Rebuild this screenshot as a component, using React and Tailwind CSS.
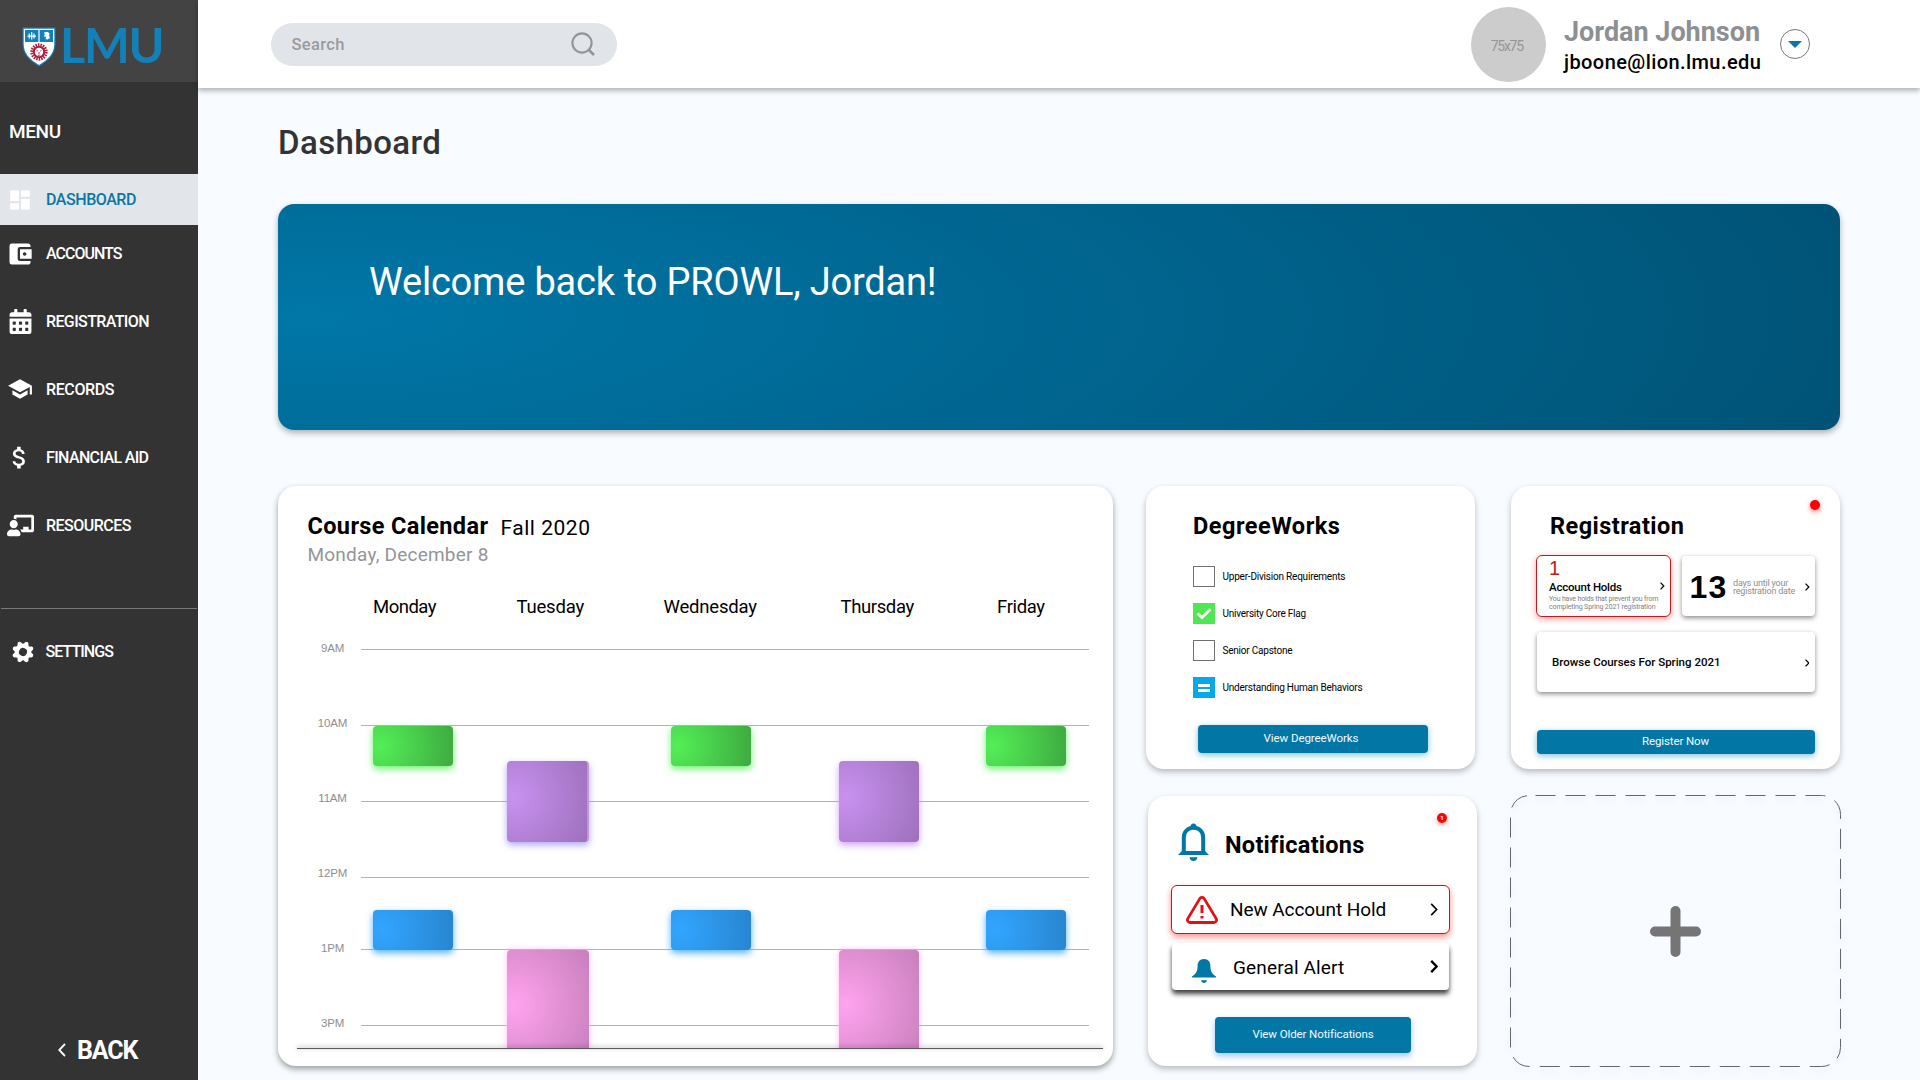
import React from "react";
import { MdDashboard, MdAccountBalanceWallet, MdSchool, MdAttachMoney } from "react-icons/md";
import { FaCalendarAlt, FaChalkboardTeacher } from "react-icons/fa";
import { BsGearFill } from "react-icons/bs";

function Chevron({ className, left = false, stroke = 2 }) {
  return (
    <svg viewBox="0 0 8 14" className={className} fill="none" stroke="currentColor" strokeWidth={stroke}>
      <path d={left ? "M7 1 L1.2 7 L7 13" : "M1 1 L6.8 7 L1 13"} />
    </svg>
  );
}

function Shield() {
  return (
    <svg viewBox="0 0 34 40" className="h-10 w-[34px]">
      <path d="M0.5 0.5H33.5V17C33.5 27 27 33.5 17 39.5C7 33.5 0.5 27 0.5 17Z" fill="#1380b8" />
      <path d="M1.7 1.7H32.3V17C32.3 26.3 26.4 32.4 17 38C7.6 32.4 1.7 26.3 1.7 17Z" fill="#fff" />
      <path d="M3 3H16.4V15H3Z M17.6 3H31V15H17.6Z" fill="#1380b8" />
      <path d="M5.5 9.2H14 M7.3 6.6V11.5 M9.7 5V12.6 M12 6.6V11.5" stroke="#fff" strokeWidth="1.2" fill="none" />
      <path d="M22 5.6L25 4.8L27.6 6.2L27 8.5L28 11L25.5 12.6L23.4 12L24.4 10L21.6 9.2L22.8 7.8Z" fill="#fff" />
      <circle cx="17" cy="25" r="7.2" fill="none" stroke="#b01c3c" strokeWidth="3" strokeDasharray="1.5 1.01" />
      <circle cx="17" cy="25" r="5.2" fill="none" stroke="#b01c3c" strokeWidth="2" />
      <path d="M14.5 23.2L15.8 24 M19.5 23.2L18.2 24 M17 25V27 M15.6 28.2H18.4" stroke="#b01c3c" strokeWidth="0.9" fill="none" />
    </svg>
  );
}

const menu = [
  { label: "REGISTRATION", Icon: FaCalendarAlt, icon: "size-[25px]", box: "w-[41.5px]", text: "tracking-[-0.62px]" },
  { label: "RECORDS", Icon: MdSchool, icon: "size-[26px]", box: "w-[40px]", text: "tracking-[-0.38px]" },
  { label: "FINANCIAL AID", Icon: MdAttachMoney, icon: "size-[29px]", box: "w-[38px]", text: "tracking-[-0.64px]" },
  { label: "RESOURCES", Icon: FaChalkboardTeacher, icon: "size-[27px]", box: "w-[40px]", text: "tracking-[-0.5px]" },
];

function Sidebar() {
  return (
    <aside className="flex h-full w-[198px] shrink-0 flex-col bg-[#333333] text-white">
      <div className="flex h-[82px] items-center bg-[#434343] pl-[22px]">
        <div className="mt-[12px]"><Shield /></div>
        <span className="mt-[6px] ml-[4px] font-[Lato] text-[48.5px] leading-none font-bold tracking-[-1.3px] text-[#1380b8]">LMU</span>
      </div>
      <div className="mt-[37px] flex h-6 items-center pl-[9px] text-[19px] font-medium tracking-[-0.4px]">MENU</div>
      <div className="mt-[31px] flex h-[51px] items-center bg-[#e2e6ea] text-[#0b76a3]">
        <div className="flex w-[40px] justify-center"><MdDashboard className="size-[26px] text-white" /></div>
        <span className="ml-[6px] text-[16px] font-medium tracking-[-0.45px]">DASHBOARD</span>
      </div>
      <div className="mb-[5px] flex h-[57px] items-center">
        <div className="flex w-[39px] justify-center"><MdAccountBalanceWallet className="mt-[1px] size-[28px]" /></div>
        <span className="mt-px ml-[7px] text-[16px] font-medium tracking-[-1px]">ACCOUNTS</span>
      </div>
      {menu.map(({ label, Icon, icon, box, text }) => (
        <div key={label} className="flex h-[68px] items-center">
          <div className="w-[46px] shrink-0"><div className={"flex justify-center " + box}><Icon className={icon} /></div></div>
          <span className={"mt-[2px] text-[16px] font-medium whitespace-nowrap " + text}>{label}</span>
        </div>
      ))}
      <div className="mx-px mt-[49px] h-px bg-[#7a7a7a]" />
      <div className="mt-[25px] flex h-[36px] items-center">
        <BsGearFill className="ml-[12px] size-[22px] rotate-[22.5deg]" />
        <span className="ml-[11.5px] text-[16px] font-medium tracking-[-0.95px]">SETTINGS</span>
      </div>
      <div className="mt-auto mb-[14px] flex h-8 items-center">
        <Chevron left className="ml-[58px] h-[14px] w-[8px]" stroke={1.8} />
        <span className="ml-[11px] text-[25px] font-bold tracking-[-1.1px]">BACK</span>
      </div>
    </aside>
  );
}

function Header() {
  return (
    <header className="z-10 flex h-[88px] shrink-0 bg-white shadow-[0_3px_5px_rgba(0,0,0,0.28)]">
      <div className="mt-[23px] ml-[73px] flex h-[43px] w-[346px] items-center rounded-full bg-[#e1e5ea] pl-[20.5px] text-[#999b9e]">
        <span className="mt-[2px] text-[16.5px] font-medium tracking-[0.36px]">Search</span>
        <svg viewBox="0 0 24 24" className="mt-[-1px] mr-[22px] ml-auto size-[24px]" fill="none" stroke="#929598" strokeWidth="2.1">
          <circle cx="11" cy="11" r="9.6" />
          <path d="M17.6 17.8L23 23" strokeWidth="2.6" />
        </svg>
      </div>
      <div className="mt-[7px] ml-[854px] flex size-[75px] shrink-0 items-center justify-center rounded-full bg-[#cccccc] pt-[3px] pr-[3.5px] text-[14px] tracking-[-1.3px] text-[#969696]">75x75</div>
      <div className="mt-[18px] ml-[18px] w-[198px] whitespace-nowrap">
        <div className="flex h-[29px] items-center text-[27px] font-bold tracking-[-0.02px] text-[#8d9093]">Jordan Johnson</div>
        <div className="flex h-[30px] items-center text-[20px] font-medium tracking-[0.42px] text-black">jboone@lion.lmu.edu</div>
      </div>
      <div className="mt-[29px] ml-[18px] flex size-[30px] items-center justify-center rounded-full border border-[#777]">
        <svg viewBox="0 0 14 7" className="h-[7px] w-[14px]"><path d="M0 0H14L7 7Z" fill="#0b76a3" /></svg>
      </div>
    </header>
  );
}

const days = [
  ["Monday", "ml-[95px] w-[64px] tracking-[-0.5px]"],
  ["Tuesday", "ml-[79.5px] w-[67px] tracking-[-0.2px]"],
  ["Wednesday", "ml-[80px] w-[93px] tracking-[-0.18px]"],
  ["Thursday", "ml-[84px] w-[73px] tracking-[-0.38px]"],
  ["Friday", "ml-[83.5px] w-[48px] tracking-[-0.36px]"],
];
const hours = ["9AM", "10AM", "11AM", "12PM", "1PM", "3PM"];
const gaps = ["mt-0", "mt-[75px]", "mt-[75px]", "mt-[75px]", "mt-[71px]", "mt-[75px]"];

const green = "w-[80px] h-[40px] bg-[radial-gradient(circle_at_8%_50%,#53ef57,#3eaa3f)] shadow-[0_3px_7px_rgba(83,239,87,0.85)]";
const blue = "w-[80px] h-[40px] bg-[radial-gradient(circle_at_12%_50%,#32a5ff,#2785cf)] shadow-[0_3px_7px_rgba(50,165,255,0.85)]";
const purple = "h-[81px] bg-[radial-gradient(circle_at_8%_45%,#c891f0,#9d70bb)]";
const pink = "h-[110px] bg-[radial-gradient(circle_at_8%_50%,#ffa3ef,#c77fbb)] shadow-[0_0_6px_rgba(255,163,239,0.7)]";
const events = [
  ["left-[12px] top-[77px]", green],
  ["left-[310px] top-[77px]", green],
  ["left-[625px] top-[77px]", green],
  ["left-[146px] top-[112px] w-[82px] border-r-2 border-[#bf95e4] shadow-[0_3px_7px_rgba(140,130,240,0.7)]", purple],
  ["left-[478px] top-[112px] w-[80px] shadow-[0_3px_7px_rgba(200,145,240,0.85)]", purple],
  ["left-[12px] top-[261px]", blue],
  ["left-[310px] top-[261px]", blue],
  ["left-[625px] top-[261px]", blue],
  ["left-[146px] top-[301px] w-[82px]", pink],
  ["left-[478px] top-[301px] w-[80px]", pink],
];

function Calendar() {
  return (
    <section className="flex h-[580px] w-[835px] shrink-0 flex-col rounded-[18px] bg-white shadow-[0_3px_6px_rgba(0,0,0,0.38)]">
      <div className="mt-[26px] flex h-[30px] items-center pl-[29.5px] whitespace-nowrap text-black">
        <span className="w-[193px] text-[23.5px] font-bold tracking-[0.36px]">Course Calendar</span>
        <span className="mt-[2px] text-[21px] tracking-[0.52px]">Fall 2020</span>
      </div>
      <div className="flex h-[24px] items-center pl-[29.5px] text-[19px] tracking-[0.22px] text-[#939598]">Monday, December 8</div>
      <div className="mt-[29px] flex h-[24px] items-center text-[18.5px] text-black">
        {days.map(([d, c]) => <span key={d} className={c}>{d}</span>)}
      </div>
      <div className="flex h-[429px]">
        <div className="w-[83px] pt-[17px] text-center font-['Liberation_Sans'] text-[11.5px] tracking-[-0.18px] text-[#8c8e91]">
          {hours.map((h) => <div key={h} className="flex h-[26px] items-center justify-center pl-[26px] [&:not(:last-child)]:mb-[49px]">{h}</div>)}
        </div>
        <div className="relative h-[429px] w-[728px] overflow-hidden pt-[30px]">
          {gaps.map((g, i) => <div key={i} className={"h-px bg-[#b3b3b3] " + g} />)}
          <div className="absolute inset-x-0 top-[30px] bottom-0">
            {events.map(([pos, look], i) => <div key={i} className={"absolute rounded-[4px] " + pos + " " + look} />)}
          </div>
        </div>
      </div>
      <div className="z-10 ml-[19px] h-px w-[806px] bg-[#5a5a5a] shadow-[0_-1px_4px_rgba(0,0,0,0.5)]" />
    </section>
  );
}

const reqs = [
  ["Upper-Division Requirements", "open", "tracking-[-0.21px]"],
  ["University Core Flag", "done", "tracking-[-0.25px]"],
  ["Senior Capstone", "open", "tracking-[-0.22px]"],
  ["Understanding Human Behaviors", "progress", "tracking-[-0.22px]"],
];

function CheckBox({ kind }) {
  if (kind === "done")
    return (
      <div className="h-[21px] w-[22px] bg-[#4fe852]">
        <svg viewBox="0 0 22 21" fill="none" stroke="#fff" strokeWidth="2.8"><path d="M4.5 10.5L9 14.6L17.5 6" /></svg>
      </div>
    );
  if (kind === "progress")
    return (
      <div className="flex h-[21px] w-[22px] flex-col items-center justify-center gap-[2px] bg-[#06a8ec]">
        <div className="h-[3px] w-[12px] bg-white" />
        <div className="h-[3px] w-[12px] bg-white" />
      </div>
    );
  return <div className="h-[21px] w-[22px] border border-[#707070]" />;
}

const cardShadow = "shadow-[0_3px_6px_rgba(0,0,0,0.26)]";

function DegreeWorks() {
  return (
    <section className={"flex h-[283px] w-[329px] flex-col rounded-[18px] bg-white " + cardShadow}>
      <h2 className="mt-[26px] ml-[47px] flex h-[30px] items-center text-[23.5px] font-bold tracking-[0.5px] text-black">DegreeWorks</h2>
      <div className="mt-[24px] ml-[47px] flex flex-col gap-[16px]">
        {reqs.map(([t, k, c]) => (
          <div key={t} className="flex h-[21px] items-center">
            <CheckBox kind={k} />
            <span className={"ml-[7.5px] text-[10px] text-black " + c}>{t}</span>
          </div>
        ))}
      </div>
      <button className="mt-[27px] ml-[52px] flex h-[28px] w-[230px] items-center justify-center rounded-[4px] bg-[#0276a5] pr-[4px] text-[11.5px] tracking-[-0.08px] text-[#f2fafd] shadow-[0_2px_6px_rgba(2,140,190,0.5)]">View DegreeWorks</button>
    </section>
  );
}

function Registration() {
  return (
    <section className={"relative flex h-[283px] w-[329px] flex-col rounded-[18px] bg-white " + cardShadow}>
      <div className="absolute top-[14px] right-[20px] size-[10px] rounded-full bg-[#ff0000] shadow-[0_2px_5px_rgba(255,0,0,0.5)]" />
      <h2 className="mt-[26px] ml-[39px] flex h-[30px] items-center text-[23.5px] font-bold tracking-[0.46px] text-black">Registration</h2>
      <div className="mt-[13px] ml-[25px] flex">
        <div className="flex h-[62px] w-[135px] items-center rounded-[6px] border border-[#c8161d] bg-white pl-[12px] shadow-[0_2px_6px_rgba(255,0,0,0.4)]">
          <div className="w-[111px] whitespace-nowrap">
            <div className="-mt-px h-[17px] font-['Liberation_Sans'] text-[20px] leading-[17px] text-[#c8161d]">1</div>
            <div className="h-[18px] text-[11.5px] leading-[20px] font-medium tracking-[-0.22px] text-black">Account Holds</div>
            <div className="h-[8px] text-[7px] leading-[8px] tracking-[-0.17px] text-[#808080]">You have holds that prevent you from</div>
            <div className="h-[8px] text-[7px] leading-[8px] tracking-[-0.14px] text-[#808080]">completing Spring 2021 registration</div>
          </div>
          <Chevron className="h-[8px] w-[4.5px] text-black" stroke={2.2} />
        </div>
        <div className="mt-px ml-[11px] flex h-[60px] w-[133px] items-center rounded-[4px] bg-white pt-px pl-[7.5px] shadow-[0_2px_5px_rgba(0,0,0,0.45)]">
          <span className="w-[43.5px] font-['Liberation_Sans'] text-[32px] font-bold tracking-[1.2px] text-black">13</span>
          <div className="w-[72px] text-[9px] leading-[8px] whitespace-nowrap text-[#8c8e91]">
            <div className="tracking-[-0.18px]">days until your</div>
            <div className="tracking-[-0.2px]">registration date</div>
          </div>
          <Chevron className="h-[8px] w-[4.5px] text-black" stroke={2.2} />
        </div>
      </div>
      <div className="mt-[15px] ml-[26px] flex h-[60px] w-[278px] items-center rounded-[4px] bg-white pt-px pl-[15px] shadow-[0_2px_5px_rgba(0,0,0,0.45)]">
        <span className="text-[11.5px] font-medium text-black">Browse Courses For Spring 2021</span>
        <Chevron className="mr-[6px] ml-auto h-[8px] w-[4.5px] text-black" stroke={2.2} />
      </div>
      <button className="mt-[38px] ml-[26px] flex h-[24px] w-[278px] items-center justify-center rounded-[4px] bg-[#0276a5] pr-px text-[11.5px] tracking-[-0.12px] text-[#f2fafd] shadow-[0_2px_6px_rgba(2,140,190,0.5)]">Register Now</button>
    </section>
  );
}

function Notifications() {
  return (
    <section className={"relative ml-[2px] flex h-[270px] w-[329px] flex-col rounded-[18px] bg-white " + cardShadow}>
      <div className="absolute top-[17px] right-[30px] flex size-[10px] items-center justify-center rounded-full bg-[#f0080c] text-[6px] font-bold text-white shadow-[0_2px_5px_rgba(255,0,0,0.4)]">1</div>
      <div className="mt-[27px] ml-[30px] flex h-[39px]">
        <svg viewBox="0 0 31 39" className="h-[39px] w-[31px]">
          <path d="M5.8 29V14.5C5.8 8.5 10 4.8 15.5 4.8S25.2 8.5 25.2 14.5V29" fill="none" stroke="#0276a5" strokeWidth="4" />
          <path d="M15.5 0.5A3 3 0 0 1 18.4 4.5H12.6A3 3 0 0 1 15.5 0.5ZM0 32L4 28H27L31 32ZM11.5 34.2H19.5C19 37 17.5 38 15.5 38S12 37 11.5 34.2Z" fill="#0276a5" />
        </svg>
        <h2 className="mt-[8px] ml-[16px] flex h-[30px] items-center text-[23.5px] font-bold tracking-[0.27px] text-black">Notifications</h2>
      </div>
      <div className="mt-[23px] ml-[23px] flex h-[49px] w-[279px] items-center rounded-[6px] border border-[#b81c22] bg-white pl-[14px] shadow-[0_3px_6px_rgba(255,0,0,0.45)]">
        <svg viewBox="0 0 32 28" className="h-[28px] w-[32px]" fill="none" stroke="#e3100f">
          <path d="M13.8 2.6L1.8 22.6A2.6 2.6 0 0 0 4 26.5H28A2.6 2.6 0 0 0 30.2 22.6L18.2 2.6A2.6 2.6 0 0 0 13.8 2.6Z" strokeWidth="2.8" />
          <path d="M16 9V17M16 20V22.6" strokeWidth="3" />
        </svg>
        <span className="ml-[12px] text-[19px] font-[450] tracking-[-0.08px] text-black">New Account Hold</span>
        <Chevron className="mr-[11px] ml-auto h-[13px] w-[8px] text-black" stroke={1.8} />
      </div>
      <div className="mt-[9px] ml-[24px] flex h-[47px] w-[277px] items-center rounded-[4px] bg-white pl-[20px] shadow-[0_4px_5px_rgba(0,0,0,0.75)]">
        <svg viewBox="0 0 24 24" className="mt-[8px] h-[24px] w-[24px]" fill="#0276a5">
          <path d="M12 0C7.6 0 5.6 3 5.6 7C5.6 12 4 15 0 17.6V18.6H24V17.6C20 15 18.4 12 18.4 7C18.4 3 16.4 0 12 0ZM9 21.3H15C14.6 23.2 13.4 24 12 24S9.4 23.2 9 21.3Z" />
        </svg>
        <span className="mt-px ml-[17px] text-[19px] font-[450] tracking-[0.15px] text-black">General Alert</span>
        <Chevron className="mr-[11px] ml-auto h-[13px] w-[8px] text-black" stroke={2.5} />
      </div>
      <button className="mt-[27px] ml-[67px] flex h-[36px] w-[196px] items-center justify-center rounded-[4px] bg-[#0276a5] text-[11.5px] tracking-[-0.1px] text-[#f2fafd] shadow-[0_3px_6px_rgba(60,140,255,0.5)]">View Older Notifications</button>
    </section>
  );
}

function AddWidget() {
  return (
    <section className="relative ml-[-1px] flex h-[272px] w-[331px] items-center justify-center">
      <svg viewBox="0 0 331 272" className="absolute inset-0 h-full w-full drop-shadow-[0_4px_3px_rgba(0,0,0,0.12)]" fill="none">
        <rect x="0.5" y="0.5" width="330" height="271" rx="19" stroke="#666666" strokeDasharray="20 10" strokeDashoffset="-6" />
      </svg>
      <svg viewBox="0 0 51 51" className="size-[51px]" stroke="#757575" strokeWidth="10" strokeLinecap="round">
        <path d="M25.5 5V46M5 25.5H46" />
      </svg>
    </section>
  );
}

export default function App() {
  return (
    <div className="flex h-[1080px] w-[1920px] overflow-hidden bg-[#f8fbff] font-[Roboto,sans-serif] leading-none">
      <Sidebar />
      <div className="flex min-w-0 flex-1 flex-col">
        <Header />
        <main className="flex flex-col pl-[80px]">
          <h1 className="mt-[34px] flex h-[40px] items-center text-[33px] font-medium tracking-[0.4px] text-[#333333]">Dashboard</h1>
          <section className="mt-[42px] h-[226px] w-[1562px] rounded-[16px] bg-[radial-gradient(ellipse_105%_190%_at_2%_50%,#0077a8,#005275)] pl-[91px] shadow-[0_3px_6px_rgba(0,0,0,0.3)]">
            <p className="pt-[58px] text-[38px] leading-[40px] tracking-[-0.2px] text-white">Welcome back to PROWL, Jordan!</p>
          </section>
          <div className="mt-[56px] flex">
            <Calendar />
            <div className="ml-[33px] flex flex-col gap-[27px]">
              <DegreeWorks />
              <Notifications />
            </div>
            <div className="ml-[34px] flex flex-col gap-[26px]">
              <Registration />
              <AddWidget />
            </div>
          </div>
        </main>
      </div>
    </div>
  );
}
